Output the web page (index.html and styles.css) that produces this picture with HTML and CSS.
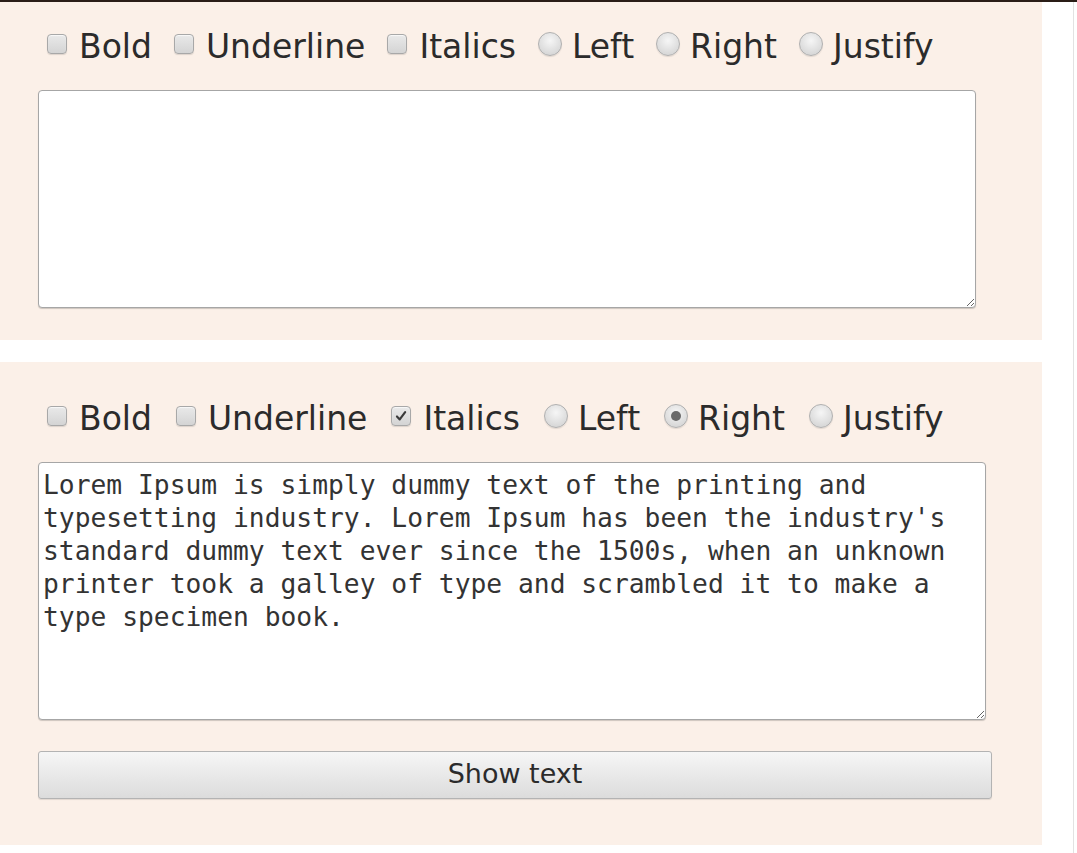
FILE: index.html
```html
<!DOCTYPE html>
<html lang="en">
<head>
<meta charset="utf-8">
<title>Text formatter</title>
<link rel="stylesheet" href="styles.css">
</head>
<body>
<div class="topline"></div>
<div class="page">
  <section class="panel panel-one">
    <div class="options">
      <label class="opt"><span class="cb"></span>Bold</label>
      <label class="opt"><span class="cb"></span>Underline</label>
      <label class="opt"><span class="cb"></span>Italics</label>
      <label class="opt"><span class="rd"></span>Left</label>
      <label class="opt"><span class="rd"></span>Right</label>
      <label class="opt"><span class="rd"></span>Justify</label>
    </div>
    <textarea class="editor editor-one"></textarea>
  </section>

  <section class="panel panel-two">
    <div class="options">
      <label class="opt"><span class="cb"></span>Bold</label>
      <label class="opt"><span class="cb"></span>Underline</label>
      <label class="opt"><span class="cb checked"><svg viewBox="0 0 20 20" width="20" height="20"><path d="M5.5 10.5 L8.6 13.8 L14.6 5.8" fill="none" stroke="#3a3a3a" stroke-width="2.4" stroke-linecap="round" stroke-linejoin="round"/></svg></span>Italics</label>
      <label class="opt"><span class="rd"></span>Left</label>
      <label class="opt"><span class="rd checked"><span class="dot"></span></span>Right</label>
      <label class="opt"><span class="rd"></span>Justify</label>
    </div>
    <textarea class="editor editor-two">Lorem Ipsum is simply dummy text of the printing and typesetting industry. Lorem Ipsum has been the industry's standard dummy text ever since the 1500s, when an unknown printer took a galley of type and scrambled it to make a type specimen book.</textarea>
    <button class="show" type="button">Show text</button>
  </section>
</div>
</body>
</html>
```

FILE: styles.css
```css
html, body {
  margin: 0;
  padding: 0;
  background: #ffffff;
}

body {
  font-family: "DejaVu Sans", "Lucida Grande", sans-serif;
  color: #2b2b2b;
  width: 1077px;
  height: 853px;
  overflow: hidden;
}

.topline {
  height: 2px;
  background: #2a1d17;
}

.page {
  display: flex;
  flex-direction: column;
  gap: 22px;
  width: 1073px;
  border-right: 1px solid #e2e2e2;
  height: 851px;
}

.panel {
  width: 1042px;
  background: #fbf0e8;
  box-sizing: border-box;
  padding-left: 38px;
  display: flex;
  flex-direction: column;
  align-items: flex-start;
}

.panel-one {
  height: 338px;
  padding-top: 24px;
}

.panel-two {
  height: 483px;
  padding-top: 36px;
}

.options {
  display: flex;
  align-items: center;
  height: 40px;
  padding-left: 9px;
  font-size: 33px;
  letter-spacing: 0;
}

.opt {
  display: flex;
  align-items: center;
  margin-right: 22px;
  white-space: nowrap;
}

.panel-two .opt {
  margin-right: 24px;
}

.cb {
  width: 20px;
  height: 20px;
  box-sizing: border-box;
  border: 1px solid #a8a8a8;
  border-radius: 4px;
  background: linear-gradient(#e9e9e9, #d4d4d4);
  box-shadow: inset 0 1px 1px rgba(255,255,255,0.7), 0 1px 1px rgba(0,0,0,0.12);
  margin-right: 12px;
  margin-top: -4px;
  display: flex;
  align-items: center;
  justify-content: center;
}

.cb svg {
  width: 18px;
  height: 18px;
}

.rd {
  width: 24px;
  height: 24px;
  box-sizing: border-box;
  border: 1px solid #b0b0b0;
  border-radius: 50%;
  background: radial-gradient(circle at 50% 35%, #f6f6f6, #d8d8d8 75%);
  box-shadow: 0 1px 1px rgba(0,0,0,0.1);
  margin-right: 10px;
  margin-top: -4px;
  display: flex;
  align-items: center;
  justify-content: center;
}

.rd .dot {
  width: 10px;
  height: 10px;
  border-radius: 50%;
  background: #6a6a6a;
}

.editor {
  display: block;
  box-sizing: border-box;
  margin: 24px 0 0 0;
  border: 1px solid #a6a6a6;
  border-radius: 4px;
  background: #ffffff;
  box-shadow: 0 1px 1px rgba(0,0,0,0.18);
  font-family: "DejaVu Sans Mono", "Liberation Mono", monospace;
  font-size: 26.3px;
  line-height: 33px;
  color: #333333;
  padding: 6px 4px;
  resize: both;
  outline: none;
}

.editor-one {
  width: 938px;
  height: 218px;
}

.editor-two {
  width: 948px;
  height: 258px;
}

.show {
  margin-top: 31px;
  width: 954px;
  height: 48px;
  box-sizing: border-box;
  border: 1px solid #b3b3b3;
  border-radius: 3px;
  background: linear-gradient(#f6f6f6, #e9e9e9 50%, #dcdcdc);
  box-shadow: 0 1px 1px rgba(0,0,0,0.1);
  font-family: "DejaVu Sans", "Lucida Grande", sans-serif;
  font-size: 27px;
  color: #2b2b2b;
  padding: 0 0 4px 0;
}
```
